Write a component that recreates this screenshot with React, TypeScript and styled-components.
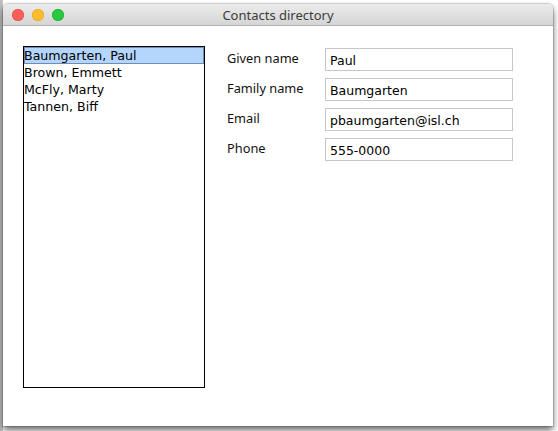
import { Fragment } from "react";
import styled, { createGlobalStyle } from "styled-components";

const GlobalStyle = createGlobalStyle`
    html, body {
        margin: 0;
        padding: 0;
        background: #ffffff;
    }
    body {
        width: 558px;
        height: 431px;
        overflow: hidden;
        background: linear-gradient(to right, #b9b9b9 0, #c8c8c8 3px, #ffffff 3px);
    }
`;

const Stage = styled.div`
    width: 558px;
    height: 431px;
    padding: 4px 5px 5px 3px;
    box-sizing: border-box;
`;

const Window = styled.div`
    width: 550px;
    height: 422px;
    background: #ffffff;
    border-radius: 5px 5px 0 0;
    box-shadow: 0 4px 7px rgba(0, 0, 0, 0.6), 0 0 0 1px rgba(0, 0, 0, 0.14);
    display: flex;
    flex-direction: column;
    overflow: hidden;
`;

const TitleBar = styled.div`
    height: 22px;
    flex: none;
    position: relative;
    display: flex;
    align-items: center;
    justify-content: center;
    background: linear-gradient(to bottom, #ebebeb, #d5d5d5);
    border-bottom: 1px solid #b1b1b1;
    box-sizing: border-box;
    font-family: "Noto Sans", "Liberation Sans", sans-serif;
    font-size: 13px;
    color: #3c3c3c;
`;

const Lights = styled.div`
    position: absolute;
    left: 9px;
    top: 5px;
    display: flex;
    gap: 8px;
`;

const Light = styled.span<{ fill: string; rim: string }>`
    width: 12px;
    height: 12px;
    border-radius: 50%;
    background: ${(p) => p.fill};
    box-shadow: inset 0 0 0 0.5px ${(p) => p.rim};
`;

const Body = styled.div`
    flex: 1;
    display: flex;
    padding: 20px 0 0 20px;
    gap: 22px;
    align-items: flex-start;
`;

const ListBox = styled.div`
    width: 182px;
    height: 342px;
    border: 1px solid #000000;
    box-sizing: border-box;
    font-family: "DejaVu Sans", Verdana, sans-serif;
    font-size: 12.6px;
    color: #000000;
`;

const ListRow = styled.div<{ selected?: boolean }>`
    height: 17px;
    line-height: 18px;
    white-space: nowrap;
    background: ${(p) => (p.selected ? "#b4d6fc" : "transparent")};
    box-shadow: ${(p) => (p.selected ? "inset 0 0 0 1px #6d8db8" : "none")};
`;

const Form = styled.div`
    margin-top: 2px;
    display: grid;
    grid-template-columns: 98px 188px;
    grid-auto-rows: 23px;
    row-gap: 7px;
`;

const Label = styled.div`
    font-family: "Noto Sans", "Liberation Sans", sans-serif;
    font-size: 12.8px;
    line-height: 16px;
    padding-top: 2px;
    color: #111111;
`;

const Field = styled.div`
    border: 1px solid #c6c6c6;
    box-sizing: border-box;
    padding: 2px 0 0 4px;
    font-family: "DejaVu Sans", Verdana, sans-serif;
    font-size: 12.5px;
    color: #000000;
    display: flex;
    align-items: center;
`;

const contacts = ["Baumgarten, Paul", "Brown, Emmett", "McFly, Marty", "Tannen, Biff"];

const fields = [
    ["Given name", "Paul"],
    ["Family name", "Baumgarten"],
    ["Email", "pbaumgarten@isl.ch"],
    ["Phone", "555-0000"],
];

const App: React.FC = () => {
    return (
        <>
            <GlobalStyle />
            <Stage>
                <Window>
                    <TitleBar>
                        <Lights>
                            <Light fill="#fc5f57" rim="#de4a42" />
                            <Light fill="#fdbc2e" rim="#de9f22" />
                            <Light fill="#28c840" rim="#1dab2c" />
                        </Lights>
                        Contacts directory
                    </TitleBar>
                    <Body>
                        <ListBox>
                            {contacts.map((c, i) => (
                                <ListRow key={c} selected={i === 0}>
                                    {c}
                                </ListRow>
                            ))}
                        </ListBox>
                        <Form>
                            {fields.map(([label, value]) => (
                                <Fragment key={label}>
                                    <Label>{label}</Label>
                                    <Field>{value}</Field>
                                </Fragment>
                            ))}
                        </Form>
                    </Body>
                </Window>
            </Stage>
        </>
    );
};

export default App;
